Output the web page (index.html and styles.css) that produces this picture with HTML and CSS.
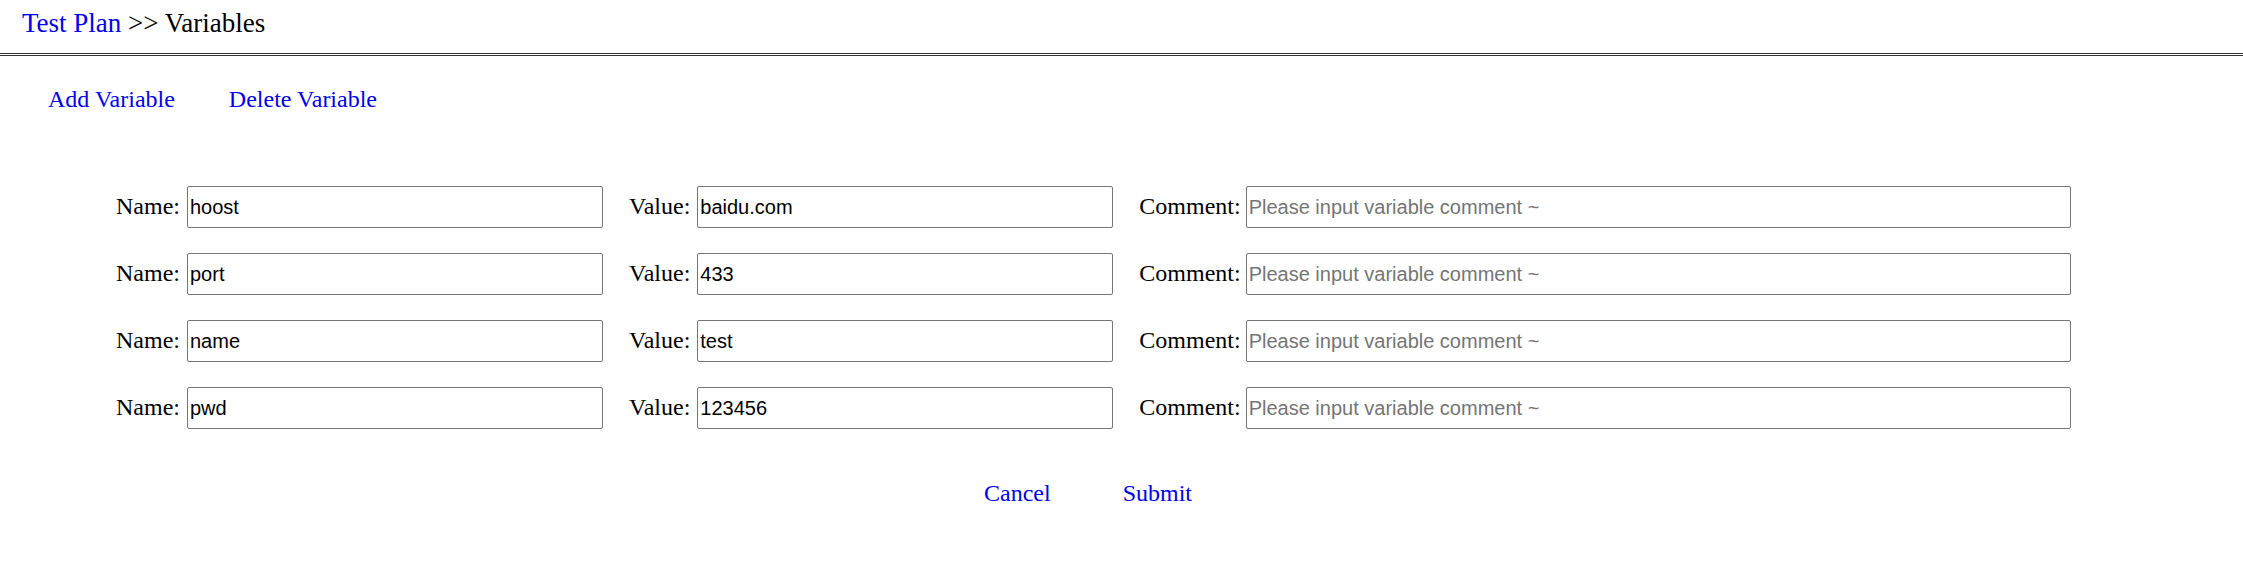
FILE: index.html
```html
<!DOCTYPE html>
<html lang="en">
<head>
<meta charset="utf-8">
<title>Variables</title>
<link rel="stylesheet" href="styles.css">
</head>
<body>
<header class="crumbs">
  <a class="link" href="#">Test Plan</a> &gt;&gt; Variables
</header>
<nav class="toolbar">
  <a class="link" href="#">Add Variable</a>
  <a class="link" href="#">Delete Variable</a>
</nav>
<form class="vars">
  <div class="row">
    <label class="field field-short"><span class="lbl">Name:</span><input class="inp" type="text" value="hoost"></label>
    <label class="field field-short"><span class="lbl">Value:</span><input class="inp" type="text" value="baidu.com"></label>
    <label class="field field-long"><span class="lbl">Comment:</span><input class="inp" type="text" placeholder="Please input variable comment ~"></label>
  </div>
  <div class="row">
    <label class="field field-short"><span class="lbl">Name:</span><input class="inp" type="text" value="port"></label>
    <label class="field field-short"><span class="lbl">Value:</span><input class="inp" type="text" value="433"></label>
    <label class="field field-long"><span class="lbl">Comment:</span><input class="inp" type="text" placeholder="Please input variable comment ~"></label>
  </div>
  <div class="row">
    <label class="field field-short"><span class="lbl">Name:</span><input class="inp" type="text" value="name"></label>
    <label class="field field-short"><span class="lbl">Value:</span><input class="inp" type="text" value="test"></label>
    <label class="field field-long"><span class="lbl">Comment:</span><input class="inp" type="text" placeholder="Please input variable comment ~"></label>
  </div>
  <div class="row">
    <label class="field field-short"><span class="lbl">Name:</span><input class="inp" type="text" value="pwd"></label>
    <label class="field field-short"><span class="lbl">Value:</span><input class="inp" type="text" value="123456"></label>
    <label class="field field-long"><span class="lbl">Comment:</span><input class="inp" type="text" placeholder="Please input variable comment ~"></label>
  </div>
  <div class="actions">
    <a class="link" href="#">Cancel</a>
    <a class="link" href="#">Submit</a>
  </div>
</form>
</body>
</html>
```
FILE: styles.css
```css
html, body {
  margin: 0;
  padding: 0;
  background: #ffffff;
}

body {
  font-family: "Liberation Serif", "Times New Roman", serif;
  color: #000000;
}

.link {
  color: #0000ee;
  text-decoration: none;
}

.crumbs {
  height: 45px;
  padding: 8px 0 0 22px;
  font-size: 27px;
  line-height: 30px;
  border-bottom: 3px double #333333;
  box-sizing: content-box;
}

.toolbar {
  display: flex;
  gap: 54px;
  padding: 29px 0 0 48px;
  font-size: 24px;
  line-height: 28px;
}

.vars {
  margin-top: 73px;
  font-size: 24px;
  line-height: 28px;
}

.row {
  display: flex;
  align-items: baseline;
  padding-left: 116px;
  margin-bottom: 25px;
}

.field {
  display: flex;
  align-items: baseline;
  margin-right: 26px;
}

.lbl {
  margin-right: 7px;
}

.field-long .lbl {
  margin-right: 5px;
}

.inp {
  box-sizing: border-box;
  height: 42px;
  padding: 1px 2px;
  border: 1px solid #767676;
  border-radius: 2px;
  font-family: "Liberation Sans", Arial, sans-serif;
  font-size: 20px;
  color: #000000;
  background: #ffffff;
  margin: 0;
}

.inp::placeholder {
  color: #757575;
}

.field-short .inp {
  width: 416px;
}

.field-long .inp {
  width: 825px;
}

.actions {
  display: flex;
  justify-content: center;
  gap: 72px;
  padding-right: 67px;
  margin-top: 50px;
}
```
